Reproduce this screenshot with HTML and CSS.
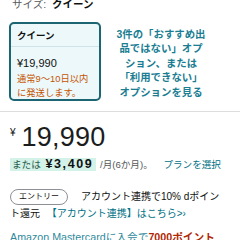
FILE: index.html
```html
<!DOCTYPE html>
<html lang="ja">
<head>
  <meta charset="UTF-8" />
  <meta name="viewport" content="width=device-width, initial-scale=1.0"/>
  <title>サイズ選択</title>
  <link rel="stylesheet" href="styles.css">
</head>
<body>
  <div class="size-line">
    <span class="label">サイズ:</span>
    <span class="value">クイーン</span>
  </div>

  <section class="options">
    <div class="option-card">
      <div class="card-title">クイーン</div>
      <div class="card-body">
        <div class="card-price">¥19,990</div>
        <div class="card-ship">通常9～10日以内に発送します。</div>
      </div>
    </div>
    <a class="more-link" href="#">3件の「おすすめ出品ではない」オプション、または「利用できない」オプションを見る</a>
  </section>

  <section class="price-box">
    <div class="price">
      <span class="yen">¥</span><span class="amount">19,990</span>
    </div>
    <div class="plan">
      <span class="plan-mark">または <b>¥3,409</b></span>
      <span class="plan-rest">/月(6か月)。</span>
      <a class="plan-link" href="#">プランを選択</a>
    </div>
    <div class="point">
      <span class="entry">エントリー</span>アカウント連携で10% dポイント還元 <a href="#">【アカウント連携】はこちら&gt;›</a>
    </div>
    <div class="card-offer">
      <a href="#">Amazon Mastercardに入会で</a><b>7000ポイント</b>
    </div>
  </section>
</body>
</html>
```

FILE: styles.css
```css
* {
  margin: 0;
  padding: 0;
  box-sizing: border-box;
}

body {
  background: #ffffff;
  color: #0f1111;
  font-family: 'Liberation Sans', 'Noto Sans CJK JP', sans-serif;
  font-size: 11px;
  overflow: hidden;
}

a {
  color: #007185;
  text-decoration: none;
}

.size-line {
  margin-top: -3px;
  padding-left: 12px;
  font-size: 10.5px;
  line-height: 14px;
}

.size-line .label {
  color: #565959;
}

.size-line .value {
  font-weight: bold;
  margin-left: 3px;
}

.options {
  display: flex;
  align-items: center;
  padding: 11px 0 10px 9px;
  border-bottom: 1px solid #dddddd;
}

.option-card {
  width: 92px;
  height: 79px;
  border: 2px solid #1c6573;
  border-radius: 5px;
  background: #edf8fb;
  flex-shrink: 0;
}

.card-title {
  font-size: 9.5px;
  font-weight: bold;
  padding: 4px 6px 0;
  height: 23px;
  border-bottom: 1px solid #cfe3e8;
}

.card-body {
  padding: 9px 6px 0;
}

.card-price {
  font-size: 11px;
  line-height: 15px;
}

.card-ship {
  color: #c45500;
  font-size: 9.3px;
  line-height: 13.5px;
  margin-top: 2px;
}

.more-link {
  width: 92px;
  margin-left: 14px;
  text-align: center;
  font-size: 10.4px;
  line-height: 14.5px;
  font-weight: bold;
  color: #1a7d92;
  margin-top: 5px;
}

.price-box {
  padding: 10px 0 0 10px;
}

.price {
  display: flex;
  align-items: flex-start;
  height: 33px;
}

.yen {
  font-size: 10px;
  margin-top: 5px;
  margin-right: 6px;
  color: #0f1111;
}

.amount {
  font-size: 27px;
  line-height: 30px;
  letter-spacing: 0.2px;
  color: #1b1d1d;
}

.plan {
  font-size: 9.6px;
  line-height: 16px;
  margin-top: 1px;
}

.plan-mark {
  background: #d5f2e9;
  padding: 1px 3px 1px 2px;
  color: #1f5a48;
}

.plan-mark b {
  color: #0f1111;
  font-size: 12.5px;
  letter-spacing: 1.6px;
  margin-left: 2px;
}

.plan-rest {
  color: #565959;
  margin-left: 1px;
  margin-right: 8px;
}

.point {
  margin-top: 15px;
  font-size: 10px;
  line-height: 17px;
  padding-right: 14px;
  word-break: break-all;
}

.entry {
  display: inline-block;
  font-size: 8px;
  line-height: 14px;
  padding: 0 8px;
  border: 1px solid #8d9096;
  border-radius: 9px;
  margin-right: 13px;
  vertical-align: top;
  margin-top: 1px;
}

.point a {
  margin-left: 4px;
}

.card-offer {
  margin-top: 8px;
  font-size: 10.7px;
  line-height: 14px;
  white-space: nowrap;
}

.card-offer a {
  color: #2f8a9c;
}

.card-offer b {
  color: #b12704;
}
```
